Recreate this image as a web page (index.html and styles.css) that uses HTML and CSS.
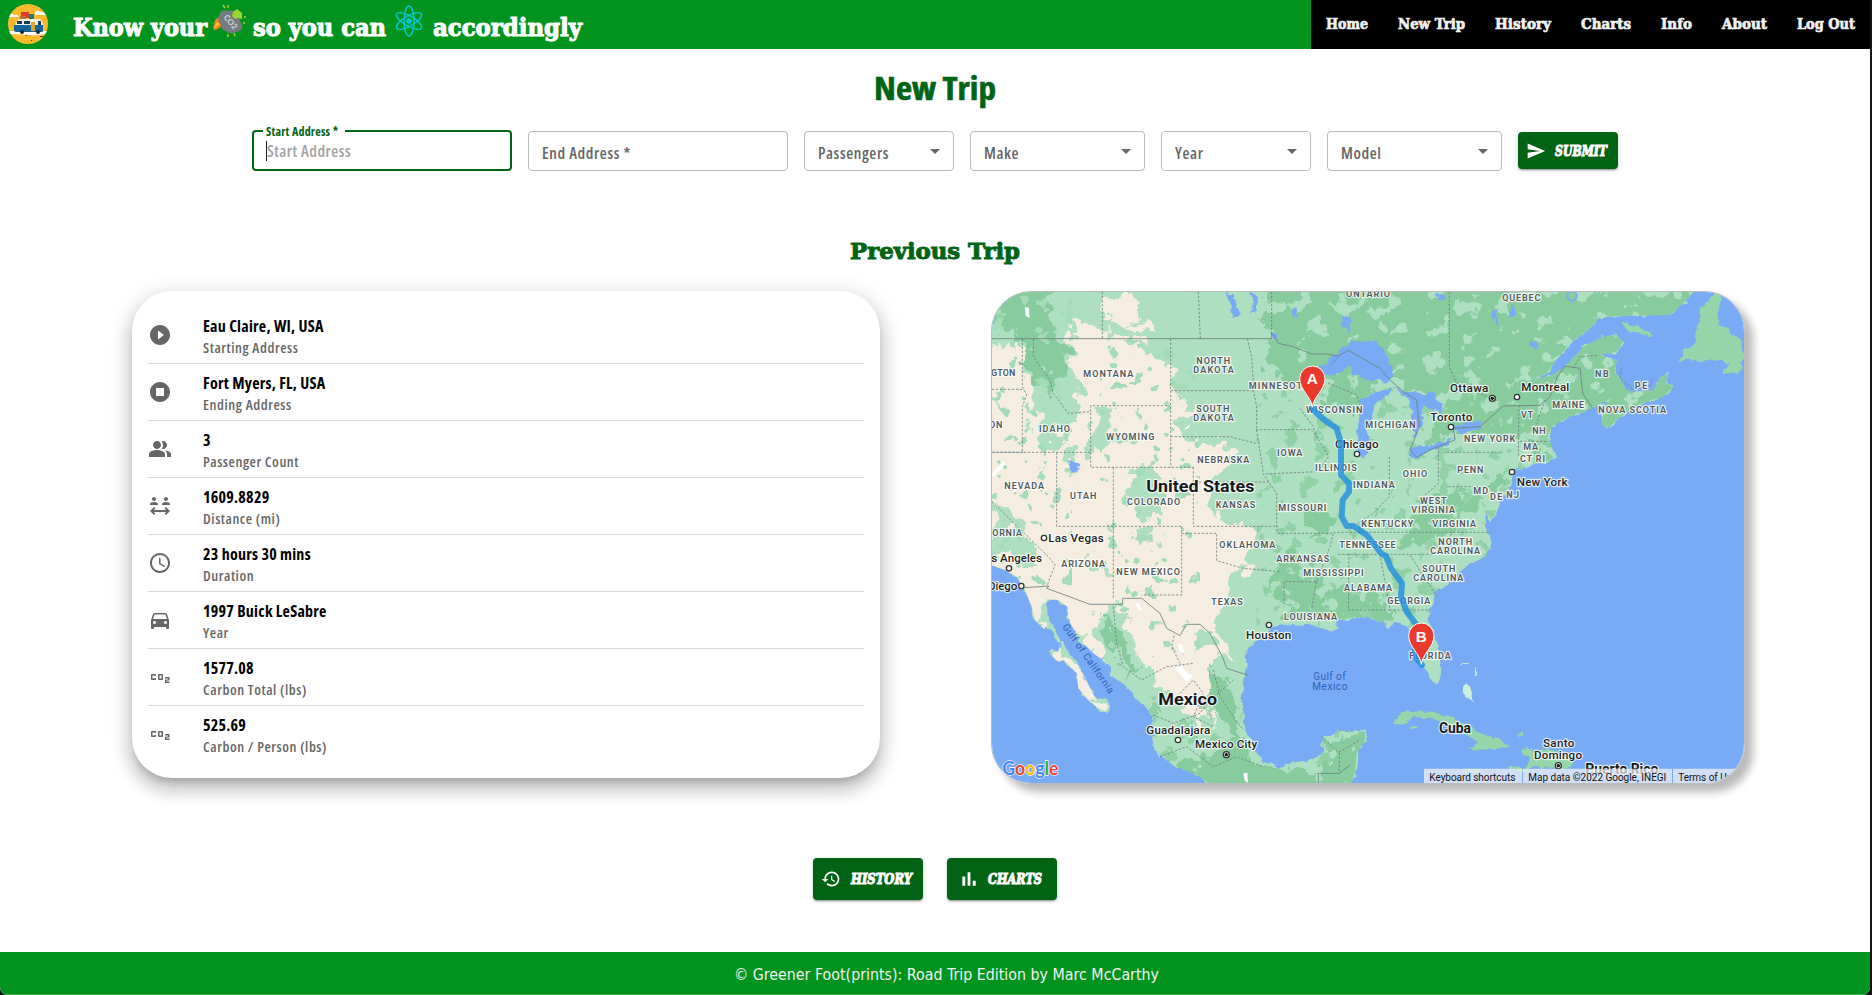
FILE: index.html
```html
<!DOCTYPE html>
<html lang="en">
<head>
<meta charset="utf-8">
<title>Greener Foot(prints): Road Trip Edition</title>
<link rel="stylesheet" href="styles.css">
</head>
<body>
<div class="app">
  <header class="header">
    <svg class="logo" viewBox="0 0 40 40">
      <defs><clipPath id="disc"><circle cx="20" cy="20" r="20"/></clipPath></defs>
      <g clip-path="url(#disc)">
        <rect width="40" height="40" fill="#fdb92e"/>
        <path d="M0 11q3-3 6 0q4-1 5 2H0zM27 8q3-3 6 0q4 0 6 3H27zM0 27h40v2q-8 3-18 2T0 30z" fill="#fff"/>
        <rect x="13" y="8" width="8" height="6" fill="#d8402c"/><rect x="21" y="10" width="5" height="5" fill="#1c7d78"/><rect x="12" y="12" width="6" height="3" fill="#b96e34"/>
        <path d="M8 20q1-5 5-5h17q4 0 5 5v2H7z" fill="#f4f1e4"/>
        <path d="M9 17h5v3H9zM16 17h6v3h-6zM30 17h3v4h-3z" fill="#1b3c57"/>
        <path d="M6 21h29v6q0 1-1 1H8q-2 0-2-2z" fill="#12669a"/>
        <path d="M23 18h4v9h-4z" fill="#e3a22b"/>
        <circle cx="14" cy="28" r="2" fill="#15233a"/><circle cx="30" cy="28" r="2" fill="#15233a"/>
        <path d="M18 31h1v1h-1zM23 36h1v1h-1zM32 32h4v1h-4z" fill="#6b2c17"/>
      </g>
    </svg>
    <h1 class="brand">
      <svg class="fit" width="134" height="40"><text y="26" textLength="134" lengthAdjust="spacingAndGlyphs">Know your</text></svg>
      <svg class="cloud" width="35" height="34" viewBox="0 0 35 34">
        <path d="M1 25l2-9 4-3 3 9-6 4z" fill="#f4861f"/><path d="M2 24l3-6 3 2z" fill="#fdc63a"/>
        <path d="M7 12a6 6 0 0 1 9-5q7-2 8 5q5 2 4 6q3 2 2 6t-7 4q-5 3-9-1q-5-1-5-6q-4-4-2-9z" fill="#757b80"/>
        <g transform="rotate(50 18 17)"><text class="cloud-text" x="11" y="20">CO2</text></g>
        <path d="M20 12l1-4 4-3 5 4v6l-4-1-3 1z" fill="#9ad52e"/>
        <path d="M11 1l2 3M16 1v3M33 12v2M32 18v2M16 30v3M22 29l1 3" stroke="#b9c92c" stroke-width="1.5"/>
      </svg>
      <svg class="fit" width="133" height="40"><text y="26" textLength="133" lengthAdjust="spacingAndGlyphs">so you can</text></svg>
      <svg class="atom" width="28" height="32" viewBox="0 0 28 32" fill="none" stroke="#00c8d2" stroke-width="1.5">
        <ellipse cx="14" cy="16" rx="5" ry="15"/><ellipse cx="14" cy="16" rx="5" ry="14.3" transform="rotate(60 14 16)"/><ellipse cx="14" cy="16" rx="5" ry="14.3" transform="rotate(-60 14 16)"/><circle cx="14" cy="16" r="2" fill="#00c8d2"/>
      </svg>
      <svg class="fit" width="149" height="40"><text y="26" textLength="149" lengthAdjust="spacingAndGlyphs">accordingly</text></svg>
    </h1>
    <nav class="nav">
      <a><svg class="fit" width="42" height="24"><text y="17" textLength="42" lengthAdjust="spacingAndGlyphs">Home</text></svg></a>
      <a><svg class="fit" width="67" height="24"><text y="17" textLength="67" lengthAdjust="spacingAndGlyphs">New Trip</text></svg></a>
      <a><svg class="fit" width="56" height="24"><text y="17" textLength="56" lengthAdjust="spacingAndGlyphs">History</text></svg></a>
      <a><svg class="fit" width="50" height="24"><text y="17" textLength="50" lengthAdjust="spacingAndGlyphs">Charts</text></svg></a>
      <a><svg class="fit" width="31" height="24"><text y="17" textLength="31" lengthAdjust="spacingAndGlyphs">Info</text></svg></a>
      <a><svg class="fit" width="45" height="24"><text y="17" textLength="45" lengthAdjust="spacingAndGlyphs">About</text></svg></a>
      <a><svg class="fit" width="58" height="24"><text y="17" textLength="58" lengthAdjust="spacingAndGlyphs">Log Out</text></svg></a>
    </nav>
  </header>

  <main class="main">
    <h2 class="title"><svg class="fit" width="122" height="46"><text y="31" textLength="122" lengthAdjust="spacingAndGlyphs">New Trip</text></svg></h2>

    <form class="form">
      <div class="field wide active"><span class="float">Start Address *</span><span class="hint">Start Address</span></div>
      <div class="field wide"><span class="label">End Address *</span></div>
      <div class="field small"><span class="label">Passengers</span><i class="arrow"></i></div>
      <div class="field medium"><span class="label">Make</span><i class="arrow"></i></div>
      <div class="field small"><span class="label">Year</span><i class="arrow"></i></div>
      <div class="field medium"><span class="label">Model</span><i class="arrow"></i></div>
      <div class="btn submit"><svg width="20" height="20" viewBox="0 0 24 24"><path d="M2.01 21 23 12 2.01 3 2 10l15 2-15 2z" fill="#fff"/></svg><svg class="fit" width="54" height="24"><text y="17" textLength="52" lengthAdjust="spacingAndGlyphs">SUBMIT</text></svg></div>
    </form>

    <h3 class="subtitle"><svg class="fit" width="170" height="36"><text y="25" textLength="170" lengthAdjust="spacingAndGlyphs">Previous Trip</text></svg></h3>

    <section class="panels">
      <ul class="card">
        <li><svg viewBox="0 0 24 24"><path d="M12 2C6.48 2 2 6.48 2 12s4.48 10 10 10 10-4.48 10-10S17.52 2 12 2zm-2 14.5v-9l6 4.5-6 4.5z"/></svg><div><b>Eau Claire, WI, USA</b><span>Starting Address</span></div></li>
        <li><svg viewBox="0 0 24 24"><path d="M12 2C6.48 2 2 6.48 2 12s4.48 10 10 10 10-4.48 10-10S17.52 2 12 2zm4 14H8V8h8v8z"/></svg><div><b>Fort Myers, FL, USA</b><span>Ending Address</span></div></li>
        <li><svg viewBox="0 0 24 24"><path d="M16.67 13.13C18.04 14.06 19 15.32 19 17v3h4v-3c0-2.18-3.57-3.47-6.33-3.87zM15 12c2.21 0 4-1.79 4-4s-1.79-4-4-4c-.47 0-.91.1-1.33.24C14.5 5.27 15 6.58 15 8s-.5 2.73-1.33 3.76c.42.14.86.24 1.33.24zM9 12c2.21 0 4-1.79 4-4s-1.79-4-4-4-4 1.79-4 4 1.79 4 4 4zm0 1c-2.67 0-8 1.34-8 4v3h16v-3c0-2.66-5.33-4-8-4z"/></svg><div><b>3</b><span>Passenger Count</span></div></li>
        <li><svg viewBox="0 0 24 24"><path d="M4 5c0-1.11.89-2 2-2s2 .89 2 2-.89 2-2 2-2-.89-2-2zm4.78 3.58C7.93 8.21 6.99 8 6 8s-1.930.21-2.78.58C2.48 8.9 2 9.620 2 10.430V11h8v-.57c0-.81-.48-1.53-1.22-1.85zM18 7c1.11 0 2-.89 2-2s-.89-2-2-2-2 .89-2 2 .89 2 2 2zm2.780 1.580C19.930 8.210 18.990 8 18 8s-1.930.210-2.780.580C14.480 8.900 14 9.620 14 10.430V11h8v-.57c0-.81-.48-1.53-1.22-1.85zM22 17l-4-4-1.410 1.410L18.170 16H5.830l1.580-1.590L6 13l-4 4 4 4 1.410-1.410L5.830 18h12.340l-1.580 1.590L18 21z"/></svg><div><b>1609.8829</b><span>Distance (mi)</span></div></li>
        <li><svg viewBox="0 0 24 24"><path d="M11.99 2C6.47 2 2 6.48 2 12s4.47 10 9.99 10C17.52 22 22 17.52 22 12S17.52 2 11.99 2zM12 20c-4.42 0-8-3.58-8-8s3.58-8 8-8 8 3.58 8 8-3.58 8-8 8zm.5-13H11v6l5.25 3.15.75-1.23-4.5-2.67z"/></svg><div><b>23 hours 30 mins</b><span>Duration</span></div></li>
        <li><svg viewBox="0 0 24 24"><path d="M18.92 6.01C18.72 5.42 18.16 5 17.5 5h-11c-.66 0-1.21.42-1.42 1.01L3 12v8c0 .55.45 1 1 1h1c.55 0 1-.45 1-1v-1h12v1c0 .55.45 1 1 1h1c.55 0 1-.45 1-1v-8l-2.08-5.99zM6.5 16c-.83 0-1.5-.67-1.5-1.5S5.67 13 6.5 13s1.500.67 1.500 1.500S7.330 16 6.500 16zm11 0c-.83 0-1.500-.67-1.500-1.500s.67-1.500 1.500-1.500 1.500.67 1.500 1.500-.67 1.500-1.500 1.500zM5 11l1.500-4.500h11L19 11H5z"/></svg><div><b>1997 Buick LeSabre</b><span>Year</span></div></li>
        <li><svg viewBox="0 0 24 24"><path d="M14 9h-3c-.55 0-1 .45-1 1v4c0 .55.45 1 1 1h3c.55 0 1-.45 1-1v-4c0-.55-.45-1-1-1zm-.5 4.500h-2v-3h2v3zM8 13v1c0 .55-.45 1-1 1H4c-.55 0-1-.45-1-1v-4c0-.55.45-1 1-1h3c.55 0 1 .45 1 1v1H6.500v-.5h-2v3h2V13H8zm12.500 2.500h-2v1h3V18H17v-2.500c0-.55.45-1 1-1h2v-1h-3V12h3.500c.55 0 1 .45 1 1v1.500c0 .55-.45 1-1 1z"/></svg><div><b>1577.08</b><span>Carbon Total (lbs)</span></div></li>
        <li><svg viewBox="0 0 24 24"><path d="M14 9h-3c-.55 0-1 .45-1 1v4c0 .55.45 1 1 1h3c.55 0 1-.45 1-1v-4c0-.55-.45-1-1-1zm-.5 4.500h-2v-3h2v3zM8 13v1c0 .55-.45 1-1 1H4c-.55 0-1-.45-1-1v-4c0-.55.45-1 1-1h3c.55 0 1 .45 1 1v1H6.500v-.5h-2v3h2V13H8zm12.500 2.500h-2v1h3V18H17v-2.500c0-.55.45-1 1-1h2v-1h-3V12h3.500c.55 0 1 .45 1 1v1.500c0 .55-.45 1-1 1z"/></svg><div><b>525.69</b><span>Carbon / Person (lbs)</span></div></li>
      </ul>

      <div class="map">
        <svg viewBox="36 36 2256 1473" width="752" height="491">
          <defs>
            <filter id="rough" x="-5%" y="-5%" width="110%" height="110%"><feTurbulence type="fractalNoise" baseFrequency="0.035" numOctaves="3" seed="4"/><feDisplacementMap in="SourceGraphic" scale="26" xChannelSelector="R" yChannelSelector="G"/></filter>
            <filter id="ragged" x="-5%" y="-5%" width="110%" height="110%"><feTurbulence type="fractalNoise" baseFrequency="0.022" numOctaves="4" seed="9"/><feDisplacementMap in="SourceGraphic" scale="100" xChannelSelector="R" yChannelSelector="G"/></filter>
            <filter id="specks" x="0" y="0" width="100%" height="100%"><feTurbulence type="fractalNoise" baseFrequency="0.018" numOctaves="4" seed="21"/><feColorMatrix values="0 0 0 0 0  0 0 0 0 0  0 0 0 0 0  30 0 0 0 -18"/><feComposite in="SourceGraphic" operator="in"/></filter>
            <filter id="fewspecks" x="0" y="0" width="100%" height="100%"><feTurbulence type="fractalNoise" baseFrequency="0.022" numOctaves="4" seed="5"/><feColorMatrix values="0 0 0 0 0  0 0 0 0 0  0 0 0 0 0  0 30 0 0 -18.6"/><feComposite in="SourceGraphic" operator="in"/></filter>
            <filter id="sparse" x="0" y="0" width="100%" height="100%"><feTurbulence type="fractalNoise" baseFrequency="0.024" numOctaves="3" seed="14"/><feColorMatrix values="0 0 0 0 0  0 0 0 0 0  0 0 0 0 0  0 30 0 0 -19.6"/><feComposite in="SourceGraphic" operator="in"/></filter>
            <path id="mainland" d="M20 20H2155L2120 60 2070 105 1930 108 1860 112 1825 150 1770 190 1730 240 1700 280 1650 298 1712 287 1755 260 1810 200 1870 170 1910 165 1930 185 1910 215 1860 225 1910 240 1905 280 1925 300 1935 328 1960 335 2020 330 2040 295 2060 280 2058 310 2080 320 2050 350 2000 365 1960 385 1910 420 1885 445 1865 435 1870 405 1860 388 1900 352 1838 385 1810 395 1780 405 1740 425 1715 440 1705 470 1715 500 1725 530 1700 545 1670 550 1600 575 1590 620 1565 645 1555 680 1535 725 1522 700 1515 735 1532 770 1538 790 1515 830 1470 850 1435 880 1405 915 1370 930 1350 975 1342 1020 1360 1060 1375 1095 1388 1150 1385 1200 1365 1212 1330 1160 1310 1135 1300 1100 1295 1060 1280 1035 1245 1025 1220 1040 1200 1025 1170 1012 1130 1012 1070 1018 1075 1045 1050 1055 1010 1035 960 1040 910 1035 880 1040 850 1075 815 1090 800 1110 795 1190 785 1250 790 1330 820 1400 850 1445 900 1460 950 1450 1000 1440 1025 1415 1030 1370 1080 1350 1130 1350 1155 1355 1155 1380 1130 1420 1125 1470 1110 1530H720L650 1485 590 1460 545 1430 520 1390 520 1310 480 1260 435 1215 390 1185 395 1160 340 1120 300 1080 265 1020 262 980 235 960 200 958 203 1010 235 1070 280 1130 310 1180 330 1225 350 1260 375 1255 385 1280 375 1295 350 1280 325 1260 295 1225 290 1180 250 1140 235 1145 198 1112 235 1115 240 1095 215 1060 190 1045 165 1020 155 980 135 930 110 890 75 870 20 850Z"/>
            <clipPath id="land"><use href="#mainland"/></clipPath>
          </defs>
          <rect x="30" y="30" width="2270" height="1490" fill="#79aaf5"/>
          <g filter="url(#rough)">
            <use href="#mainland" fill="#aedfc0"/>
            <path d="M2170 70l30-25 25 5-15 60 30 40 40 30 12 50-12 50-50 0 15-35-65-5-80 5 10-30 35-35 15-60zM1925 130l45 5 45 30-25 5-40-15zM1240 1330l20-25 40-13 60 0 50 18 60 30 50 22 70 35-50 12-70-2 20-15-30-30-60-28-60-22-40 0-38 22zM1622 1405l50 5 60 5 50 25-10 25-110-4-28 4 15-25-20-20zM1585 1460l55 5-5 12-50-5zM1450 1465l45-2 8 10-48 0zM1290 1340l15-6 8 8-15 8zM1610 1364l20-4v6l-20 4z" fill="#96d6aa"/>
            <path d="M1450 1215l10-5 15 35 2 20-15-12-14-20zM1435 1157l30-4-4 5zM1487 1160l5 0-4 25-4 0z" fill="#cdeed8"/>
          </g>
          <g clip-path="url(#land)">
            <g fill="#f4ede0" filter="url(#ragged)" transform="translate(18 12)">
              <path d="M-40 190L120 175 130 290 190 390 240 440 290 340 255 250 250 165 470 165 510 230 570 270 570 340 640 370 570 410 580 460 700 470 750 530 700 570 660 590 680 700 800 730 780 860 720 930 690 1020 710 1070 770 1130 690 1110 670 1180 680 1310 630 1330 580 1250 490 1160 450 1100 420 980 350 970 310 1060 390 1170 330 1160 260 1030 180 940 160 1020 260 1140 330 1230 400 1300 300 1290 100 950 -40 850Z"/>
              <path d="M340 30h90l40 50-40 40-60-10zM270 120l80-5 15 50-85 5zM420 120l80-8 20 25-70 6z"/>
            </g>
            <g fill="#aedfc0" filter="url(#ragged)" transform="translate(18 12)">
              <path d="M200 270l60 30 20 80-50-20 50 60-60 20 10 40-40 30-40-50-10-40zM325 370l45 10 10 60-50 70-20 0zM430 565l60-20 60 50-20 90-70 20-50-50zM460 735l45-10 0 50-40 20zM245 490l25 10-5 90-20-20zM20 635l50 50 90 130-40 30-120-50zM330 980l80 10 30 110 110 140 90 150-70 40-90-120-110-150zM625 1040l50 0 0 50-50 20zM300 825l90 35-10 35-80-45z"/>
            </g>
            <g fill="#88cc9d" filter="url(#ragged)">
              <path d="M-20 -20H200L220 170 270 220 210 340 160 290 110 170 -20 90ZM860 -20H2320V500L1700 560 1630 470 1500 480 1440 470 1330 500 1350 430 1400 400 1300 340 1200 260 1150 380 1040 380 960 300 870 270 850 200Z"/>
              <path d="M1590 560L1520 620 1400 620 1300 700 1240 800 1330 800 1450 700 1560 640ZM880 830L1000 820 1010 890 1110 930 1220 930 1230 1010 1010 1020 920 1000 870 950ZM970 690l80 10 10 60-70 10zM700 1170l50 80 30 130 60 80 250 30 0 60-350 0-190-90 120-20 80-70-60-110zM1040 1380l120-30-30 160-90 0zM370 1020l40 20 50 120-20 40z"/>
            </g>
            <rect x="840" y="36" width="1500" height="1100" fill="#aedfc0" filter="url(#specks)"/>
            <path d="M830 300h900v740H830zM500 1250h700v270H500z" fill="#88cc9d" opacity=".75" filter="url(#fewspecks)"/>
            <path d="M36 36h240v900H36zM360 180h300v950H360z" fill="#a5dcb8" filter="url(#sparse)"/>
          </g>
          <g fill="#79aaf5" filter="url(#rough)">
            <path d="M1010 270L1060 225 1105 190 1190 180 1225 235 1240 290 1220 305 1180 300 1120 285 1110 260 1060 285 1020 295ZM1145 355L1195 335 1235 325 1230 340 1190 365 1180 405 1160 460 1172 500 1150 535 1127 500 1132 430ZM1235 320L1285 332 1360 345 1390 370 1375 400 1330 378 1322 440 1305 470 1295 420 1290 370 1260 335ZM1280 525L1310 502 1370 490 1425 478 1410 492 1350 510 1310 538ZM1415 445L1460 425 1515 425 1500 450 1440 460ZM740 36l25 5 2 30 12 32-20 10-12-40zM815 40h20l-5 55-15 0zM872 150l26 8-2 24-22-5zM1090 110l22 5-5 42-22-18zM265 535l30 22-8 22-18-16zM1590 90l10-20 5 30-20 20zM1650 190l20-8 10 15-20 10zM1370 40h30l-6 20-20-4zM935 90l10-8 6 30-12 0zM1540 90l8 0 4 40-10 0z"/>
          </g>
          <circle cx="1776" cy="48" r="14" fill="none" stroke="#79aaf5" stroke-width="6"/>
          <path d="M36 580l35-38 6 10-38 40zM465 970l12-5 10 30-14-8zM595 1090l12 4 6 24-16-6zM585 1165l20-8 15 20 20 10-20 22-14-20zM135 80l12 4 2 30-12-6zM790 1480l12-2 2 30-10-6zM610 450l20-18-4 12z" fill="#fff"/>

          <g fill="none" stroke="#6f7f7e" stroke-width="2.5">
            <path d="M36 176H875V155L895 190 940 200 965 210 995 222 1040 222 1075 228 1105 211 1200 265 1230 300 1270 335 1310 360 1318 440 1290 510 1310 532 1360 505 1425 480 1420 445 1500 440 1570 378 1680 376 1710 350 1732 290 1755 258 1800 265 1808 340 1838 385M133 923L207 918 200 925 330 973H428V955H485L540 1000 560 1045 600 1067 620 1033H660L690 1060 727 1130 740 1165 805 1186M1110 1455L1078 1480H1015V1509"/>
            <g stroke-dasharray="7 5">
              <path d="M367 36V176M655 36L661 176M875 36V150M127 176V320L140 345 127 380V517M160 176V230L210 300 220 340 265 400 332 395V377H570M572 176V562M572 332H822M802 176L815 230 822 340 830 380V450L850 580M36 328H130M36 517H332V395M332 517V562H640M230 517V739H605M400 562V955M640 562V606H868M572 470H750L827 490M827 449H995L1030 500 1045 530 1015 575 850 582 890 640V760M605 739V945H485M605 760H710V842L790 865 900 875M640 606V739H893M36 665L205 830 225 855 200 920M130 517H36M893 760H1060L1050 800 1010 905H912V980M1075 823H1360L1420 757M1107 820L1105 990H1230M1010 905L995 985M960 385L1000 440 1010 470M1075 230L1050 260M1045 310L1130 345 1150 400M1075 490H1140M1228 530V650L1180 700 1110 745M1060 757H1532M1375 500V610L1330 650M1400 517H1560M1405 620H1530M1617 376L1615 530M1697 360L1680 400 1660 470M1620 484H1705M1408 36V260L1430 310 1520 350M1200 823L1230 990H1345M1290 825L1370 950M582 1067L575 1100 600 1150M400 980L410 1090 430 1160 485 1200 560 1160 640 1150M520 1305L580 1330 660 1300 690 1260 760 1200M540 1430L620 1400 700 1460 770 1430 850 1460M700 1170L720 1250 760 1310 790 1350M600 1240L640 1200 670 1240 640 1310 700 1340M1025 1370L1075 1418 1140 1380M1078 1418V1480M1780 265L1800 230 1850 226M1925 265L1920 295 1955 325 2010 320 2018 295"/>
            </g>
          </g>

          <g class="cities" fill="#fff" stroke="#333" stroke-width="4">
            <circle cx="1131" cy="522" r="8"/><circle cx="192" cy="774" r="8"/><circle cx="87" cy="865" r="8"/><circle cx="124" cy="918" r="8"/><circle cx="867" cy="1035" r="8"/><circle cx="594" cy="1380" r="8"/><circle cx="739" cy="1424" r="9"/><circle cx="1611" cy="351" r="8"/><circle cx="1537" cy="355" r="9"/><circle cx="1413" cy="441" r="8"/><circle cx="1596" cy="576" r="8"/><circle cx="1735" cy="1457" r="9"/>
          </g>
          <g fill="#111"><circle cx="739" cy="1424" r="5"/><circle cx="1537" cy="355" r="5"/><circle cx="1735" cy="1457" r="5"/></g>

          <g class="state">
            <text x="33" y="288" textLength="73">GTON</text><text x="27" y="444" textLength="40">ON</text><text x="37" y="767" textLength="89">ORNIA</text>
            <text x="310" y="291" textLength="150">MONTANA</text><text x="177" y="456" textLength="93">IDAHO</text><text x="379" y="480" textLength="144">WYOMING</text><text x="73" y="627" textLength="119">NEVADA</text><text x="270" y="657" textLength="79">UTAH</text><text x="441" y="675" textLength="160">COLORADO</text><text x="707" y="684" textLength="119">KANSAS</text><text x="652" y="549" textLength="156">NEBRASKA</text>
            <text x="649" y="252" textLength="101">NORTH</text><text x="640" y="279" textLength="121">DAKOTA</text><text x="649" y="396" textLength="99">SOUTH</text><text x="640" y="423" textLength="121">DAKOTA</text>
            <text x="806" y="327" textLength="180">MINNESOTA</text><text x="978" y="399" textLength="169">WISCONSIN</text><text x="891" y="528" textLength="76">IOWA</text><text x="1005" y="573" textLength="125">ILLINOIS</text><text x="895" y="693" textLength="144">MISSOURI</text><text x="1119" y="624" textLength="125">INDIANA</text><text x="1156" y="444" textLength="151">MICHIGAN</text><text x="1098" y="51" textLength="132">ONTARIO</text><text x="1567" y="62" textLength="114">QUEBEC</text><text x="1144" y="741" textLength="156">KENTUCKY</text>
            <text x="1845" y="291" textLength="41">NB</text><text x="1964" y="327" textLength="38">PE</text><text x="1855" y="399" textLength="203">NOVA SCOTIA</text><text x="1717" y="384" textLength="95">MAINE</text><text x="1623" y="415" textLength="36">VT</text><text x="1657" y="462" textLength="40">NH</text><text x="1452" y="486" textLength="154">NEW YORK</text><text x="1630" y="510" textLength="44">MA</text><text x="1620" y="547" textLength="75">CT RI</text><text x="1432" y="580" textLength="78">PENN</text><text x="1268" y="591" textLength="74">OHIO</text><text x="1480" y="642" textLength="44">MD</text><text x="1530" y="660" textLength="37">DE</text><text x="1579" y="654" textLength="38">NJ</text>
            <text x="1320" y="672" textLength="80">WEST</text><text x="1294" y="699" textLength="131">VIRGINIA</text><text x="1357" y="741" textLength="131">VIRGINIA</text>
            <text x="244" y="861" textLength="131">ARIZONA</text><text x="409" y="886" textLength="191">NEW MEXICO</text><text x="718" y="804" textLength="168">OKLAHOMA</text><text x="889" y="847" textLength="159">ARKANSAS</text><text x="970" y="888" textLength="181">MISSISSIPPI</text><text x="1092" y="934" textLength="144">ALABAMA</text><text x="1078" y="804" textLength="169">TENNESSEE</text><text x="694" y="975" textLength="94">TEXAS</text><text x="912" y="1020" textLength="159">LOUISIANA</text>
            <text x="1375" y="796" textLength="101">NORTH</text><text x="1351" y="823" textLength="149">CAROLINA</text><text x="1326" y="877" textLength="100">SOUTH</text><text x="1300" y="904" textLength="150">CAROLINA</text><text x="1222" y="973" textLength="129">GEORGIA</text><text x="1288" y="1138" textLength="124">FLORIDA</text>
          </g>
          <g class="city">
            <text x="1065" y="504" textLength="131">Chicago</text><text x="1410" y="335" textLength="115">Ottawa</text><text x="1624" y="332" textLength="144">Montreal</text><text x="1351" y="423" textLength="126">Toronto</text><text x="1610" y="618" textLength="153">New York</text><text x="205" y="787" textLength="166">Las Vegas</text><text x="34" y="847" textLength="152">s Angeles</text><text x="24" y="930" textLength="88">Diego</text><text x="798" y="1077" textLength="136">Houston</text><text x="499" y="1361" textLength="192">Guadalajara</text><text x="645" y="1405" textLength="187">Mexico City</text><text x="1689" y="1402" textLength="94">Santo</text><text x="1662" y="1438" textLength="144">Domingo</text>
          </g>
          <g class="country">
            <text x="499" y="636" textLength="324" lengthAdjust="spacingAndGlyphs">United States</text><text x="535" y="1276" textLength="176" lengthAdjust="spacingAndGlyphs">Mexico</text><text class="mid" x="1377" y="1360" textLength="96" lengthAdjust="spacingAndGlyphs">Cuba</text><text class="mid" x="1816" y="1482" textLength="219" lengthAdjust="spacingAndGlyphs">Puerto Rico</text>
          </g>
          <g class="water"><text x="1000" y="1201" textLength="97">Gulf of</text><text x="997" y="1231" textLength="105">Mexico</text><text transform="translate(246 1040) rotate(55)" textLength="247">Gulf of California</text></g>

          <path d="M997 385L1010 400 1040 425 1070 445 1083 490V585L1107 610V635L1088 660 1085 710 1100 738H1120L1160 765 1205 822 1218 828 1233 865 1266 910 1263 950 1280 995 1310 1035 1325 1075 1305 1110 1310 1135 1326 1155" fill="none" stroke="#1f8fe0" stroke-opacity=".8" stroke-width="18" stroke-linejoin="round" stroke-linecap="round"/>
          <g class="pin">
            <path d="M997 382C994 350 959 330 959 296A38 38 0 0 1 1035 296C1035 330 1000 350 997 382Z"/><text x="997" y="313">A</text>
            <path d="M1324 1153C1321 1121 1286 1101 1286 1067A38 38 0 0 1 1362 1067C1362 1101 1327 1121 1324 1153Z"/><text x="1324" y="1085">B</text>
          </g>
          <text class="google" x="67" y="1485" textLength="168" lengthAdjust="spacingAndGlyphs"><tspan fill="#4285f4">G</tspan><tspan fill="#ea4335">o</tspan><tspan fill="#fbbc05">o</tspan><tspan fill="#4285f4">g</tspan><tspan fill="#34a853">l</tspan><tspan fill="#ea4335">e</tspan></text>
          <path d="M1332 1466H1626V1512H1332ZM1629 1466H2076V1512H1629ZM2079 1466H2292V1512H2079Z" fill="#f5f5f5" fill-opacity=".7"/>
          <g class="legal"><text x="1348" y="1503" textLength="258">Keyboard shortcuts</text><text x="1645" y="1503" textLength="414">Map data ©2022 Google, INEGI</text><text x="2095" y="1503" textLength="176">Terms of Use</text></g>
        </svg>
      </div>
    </section>

    <div class="actions">
      <div class="btn big"><svg width="20" height="20" viewBox="0 0 24 24" fill="#fff"><path d="M13 3c-4.970 0-9 4.030-9 9H1l3.890 3.890.07.14L9 12H6c0-3.870 3.130-7 7-7s7 3.130 7 7-3.130 7-7 7c-1.930 0-3.680-.79-4.940-2.060l-1.420 1.420C8.270 19.990 10.510 21 13 21c4.970 0 9-4.030 9-9s-4.030-9-9-9zm-1 5v5l4.280 2.540.72-1.210-3.500-2.080V8H12z"/></svg><svg class="fit" width="64" height="24"><text y="17" textLength="61" lengthAdjust="spacingAndGlyphs">HISTORY</text></svg></div>
      <div class="btn big"><svg width="20" height="20" viewBox="0 0 24 24" fill="#fff"><path d="M4 9h3.500v11H4zM16.500 14H20v6h-3.500zM10.300 4h3.400v16h-3.400z"/></svg><svg class="fit" width="57" height="24"><text y="17" textLength="54" lengthAdjust="spacingAndGlyphs">CHARTS</text></svg></div>
    </div>
  </main>

  <footer class="footer"><svg class="fit" width="426" height="30"><text y="20" textLength="425" lengthAdjust="spacingAndGlyphs">© Greener Foot(prints): Road Trip Edition by Marc McCarthy</text></svg></footer>
</div>
</body>
</html>
```
FILE: styles.css
```css
* { box-sizing: border-box; }
html { background: #14131f; }
body { margin: 0; font-family: "Open Sans", sans-serif; overflow: hidden; }
.app { width: 1870px; height: 995px; display: flex; flex-direction: column; background: #fff; border-radius: 0 0 8px 8px; overflow: hidden; }
.fit { display: block; overflow: visible; }

.header { height: 49px; flex: none; display: flex; background: #00941e; }
.logo { width: 40px; height: 40px; margin: 4px 0 0 8px; }
.brand { margin: 0 0 0 25px; padding-top: 10px; display: flex; font: 900 24px "DejaVu Serif", serif; }
.brand .fit { fill: #fff; stroke: #fff; stroke-width: 1.1; }
.cloud { margin: -6px 6px 0 5px; }
.cloud-text { font: bold 8px Lato, sans-serif; fill: #d4d7d9; }
.atom { margin: -5px 10px 0 9px; }
.nav { margin-left: auto; width: 559px; padding: 12px 0 0 15px; display: flex; gap: 30px; background: #000; font: 900 14px "DejaVu Serif", serif; }
.nav .fit { fill: #f1f1f1; stroke: #f1f1f1; stroke-width: .7; }

.main { flex: 1; display: flex; flex-direction: column; align-items: center; }
.title { margin: 20px 0 0; height: 61px; font: 700 32px "Open Sans", sans-serif; font-stretch: 75%; fill: #006414; }
.title .fit { stroke: #006414; stroke-width: .6; }
.form { display: flex; gap: 16px; margin: 0; height: 42px; font-stretch: 75%; }
.field { position: relative; height: 40px; margin-top: 1px; padding: 0 13px; border: 1px solid #bcbcbc; border-radius: 4px; color: #666; display: flex; align-items: center; justify-content: space-between; font-size: 16px; font-weight: 560; letter-spacing: .6px; }
.field .label { padding-top: 3px; white-space: nowrap; }
.wide { width: 260px; }
.small { width: 150px; }
.medium { width: 175px; }
.active { border: 2px solid #006414; margin-top: 0; height: 41px; padding: 0 12px; }
.active .hint { color: #a2a2a2; border-left: 1px solid #222; line-height: 20px; margin-top: 1px; letter-spacing: .5px; }
.float { position: absolute; left: 9px; top: -8px; width: 82px; padding: 0 0 0 3px; background: #fff; color: #006414; font-size: 12px; line-height: 15px; font-weight: 700; letter-spacing: .2px; white-space: nowrap; }
.arrow { border: 5px solid transparent; border-top-color: #666; border-bottom: 0; }
.btn { display: flex; align-items: center; background: #006414; border-radius: 4px; box-shadow: 0 3px 1px -2px rgba(0,0,0,.2), 0 2px 2px rgba(0,0,0,.14), 0 1px 5px rgba(0,0,0,.12); font: italic 900 14px "DejaVu Serif", serif; }
.btn .fit { fill: #fff; stroke: #fff; stroke-width: 1.1; }
.submit { width: 100px; height: 37px; margin-top: 2px; padding-left: 8px; gap: 9px; }

.subtitle { margin: 62px 0 0; height: 57px; font: 900 23px "DejaVu Serif", serif; fill: #006414; }
.subtitle .fit { stroke: #006414; stroke-width: 1; }
.panels { width: 1870px; display: flex; padding-left: 132px; gap: 111px; align-items: flex-start; height: 492px; }
.card { width: 748px; height: 487px; margin: 0; padding: 16px; list-style: none; border-radius: 40px; background: #fff; box-shadow: 0 7px 8px -4px rgba(0,0,0,.2), 0 12px 17px 2px rgba(0,0,0,.14), 0 5px 22px 4px rgba(0,0,0,.12); }
.card li { height: 57px; border-bottom: 1px solid #dadada; display: flex; align-items: center; }
.card li:last-child { border: 0; height: 56px; }
.card svg { width: 24px; height: 24px; fill: #666; margin-right: 31px; }
.card div { display: flex; flex-direction: column; padding-top: 3px; font-stretch: 75%; }
.card b { font-size: 16px; line-height: 22px; font-weight: 700; color: #000; letter-spacing: .25px; }
.card span { font-size: 14.5px; line-height: 21px; font-weight: 560; color: #666; letter-spacing: .55px; }
.map { width: 754px; height: 493px; border: 1px solid #bbb; border-radius: 40px; overflow: hidden; box-shadow: 8px 8px 9px #b9b9b9; }
.map svg { display: block; }
.map text { font-family: Roboto, sans-serif; }
.state text, .city text, .country text { paint-order: stroke; stroke: #fff; stroke-opacity: .8; stroke-width: 7px; stroke-linejoin: round; }
.state { font-size: 27px; font-weight: 600; fill: #51585c; }
.city { font-size: 35px; font-weight: 500; fill: #1d1f21; }
.country { font-size: 51px; font-weight: 700; fill: #17191b; }
.country .mid { font-size: 42px; }
.water { font-size: 30px; fill: #2a62b8; }
.pin path { fill: #ea3a2e; stroke: #fff; stroke-width: 3px; }
.pin text { font: 700 46px "Liberation Sans", sans-serif; fill: #fff; text-anchor: middle; }
.map .google { font-family: Lato, sans-serif; font-size: 56px; font-weight: 700; paint-order: stroke; stroke: #fff; stroke-width: 4px; }
.legal { font-size: 30px; fill: #111; }

.actions { display: flex; gap: 24px; margin-top: 75px; }
.big { width: 110px; height: 42px; gap: 10px; padding-left: 8px; }
.big + .big { padding-left: 12px; gap: 9px; }
.footer { flex: none; height: 43px; padding: 8px 0 0 23px; display: flex; justify-content: center; background: #00941e; border-bottom: 1px solid #4aa85a; font: 16px "DejaVu Sans Condensed", "DejaVu Sans", sans-serif; fill: #f0f0f0; }
```
